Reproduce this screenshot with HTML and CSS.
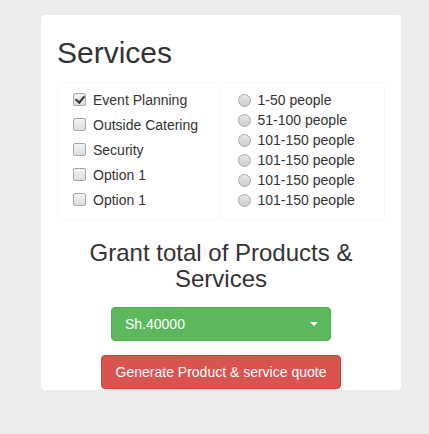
FILE: index.html
```html
<!DOCTYPE HTML>
<html lang="en">
<head>
	<meta charset="utf-8">
	<link rel="stylesheet" href="styles.css">
</head>
<body>
	<div class="panel">
		<h2 class="title">Services</h2>
		<div class="choices">
			<div class="box checks">
				<label class="row"><span class="check on"></span>Event Planning</label>
				<label class="row"><span class="check"></span>Outside Catering</label>
				<label class="row"><span class="check"></span>Security</label>
				<label class="row"><span class="check"></span>Option 1</label>
				<label class="row"><span class="check"></span>Option 1</label>
			</div>
			<div class="box radios">
				<label class="row"><span class="radio"></span>1-50 people</label>
				<label class="row"><span class="radio"></span>51-100 people</label>
				<label class="row"><span class="radio"></span>101-150 people</label>
				<label class="row"><span class="radio"></span>101-150 people</label>
				<label class="row"><span class="radio"></span>101-150 people</label>
				<label class="row"><span class="radio"></span>101-150 people</label>
			</div>
		</div>
		<h3 class="total">Grant total of Products &amp; Services</h3>
		<div class="dropdown">
			<span>Sh.40000</span>
			<span class="caret"></span>
		</div>
		<a href="javascript:;" class="btn-quote">Generate Product &amp; service quote</a>
	</div>
</body>
</html>
```

FILE: styles.css
```css
*{padding:0;margin:0;box-sizing:border-box;text-decoration:none;}
body{background:#ececec;font-family:"Liberation Sans",Arial,sans-serif;font-size:14px;color:#333;padding:15px 0 0 41px;}
.panel{width:360px;background:#fff;border-radius:4px;padding:0 16px 1px;display:flex;flex-direction:column;align-items:center;}
.title{align-self:flex-start;font-size:30px;font-weight:normal;line-height:33px;margin-top:21px;}
.choices{display:flex;width:328px;margin-top:13px;}
.box{flex:1;border:1px solid #f8f8f8;border-radius:4px;display:flex;flex-direction:column;}
.checks{padding:4px 0 7px 15px;}
.checks .row{height:25px;}
.radios{padding:7px 0 9px 15px;margin-left:1px;}
.radios .row{height:20px;}
.row{display:flex;align-items:center;}
.check{width:13px;height:13px;border:1px solid #a6a6a6;border-radius:2px;background:linear-gradient(#f4f4f4,#dedede);margin-right:7px;position:relative;}
.check.on:after{content:"";position:absolute;left:3px;top:0px;width:4px;height:7px;border:solid #333;border-width:0 2px 2px 0;transform:rotate(40deg);}
.radio{width:13px;height:13px;border:1px solid #a9a9a9;border-radius:50%;background:linear-gradient(#e6e6e6,#cfcfcf);margin-right:7px;}
.total{font-size:24px;font-weight:normal;line-height:26px;text-align:center;width:270px;margin-top:20px;}
.dropdown{width:220px;height:34px;margin-top:15px;background:#5cb85c;border:1px solid #4cae4c;border-radius:4px;color:#fff;display:flex;align-items:center;justify-content:space-between;padding:0 12px 0 13px;}
.caret{width:0;height:0;border-top:4px solid #fff;border-left:4px solid transparent;border-right:4px solid transparent;}
.btn-quote{display:block;margin-top:14px;background:#d9534f;border:1px solid #d43f3a;border-radius:4px;color:#fff;padding:0 14px;line-height:32px;}
```
